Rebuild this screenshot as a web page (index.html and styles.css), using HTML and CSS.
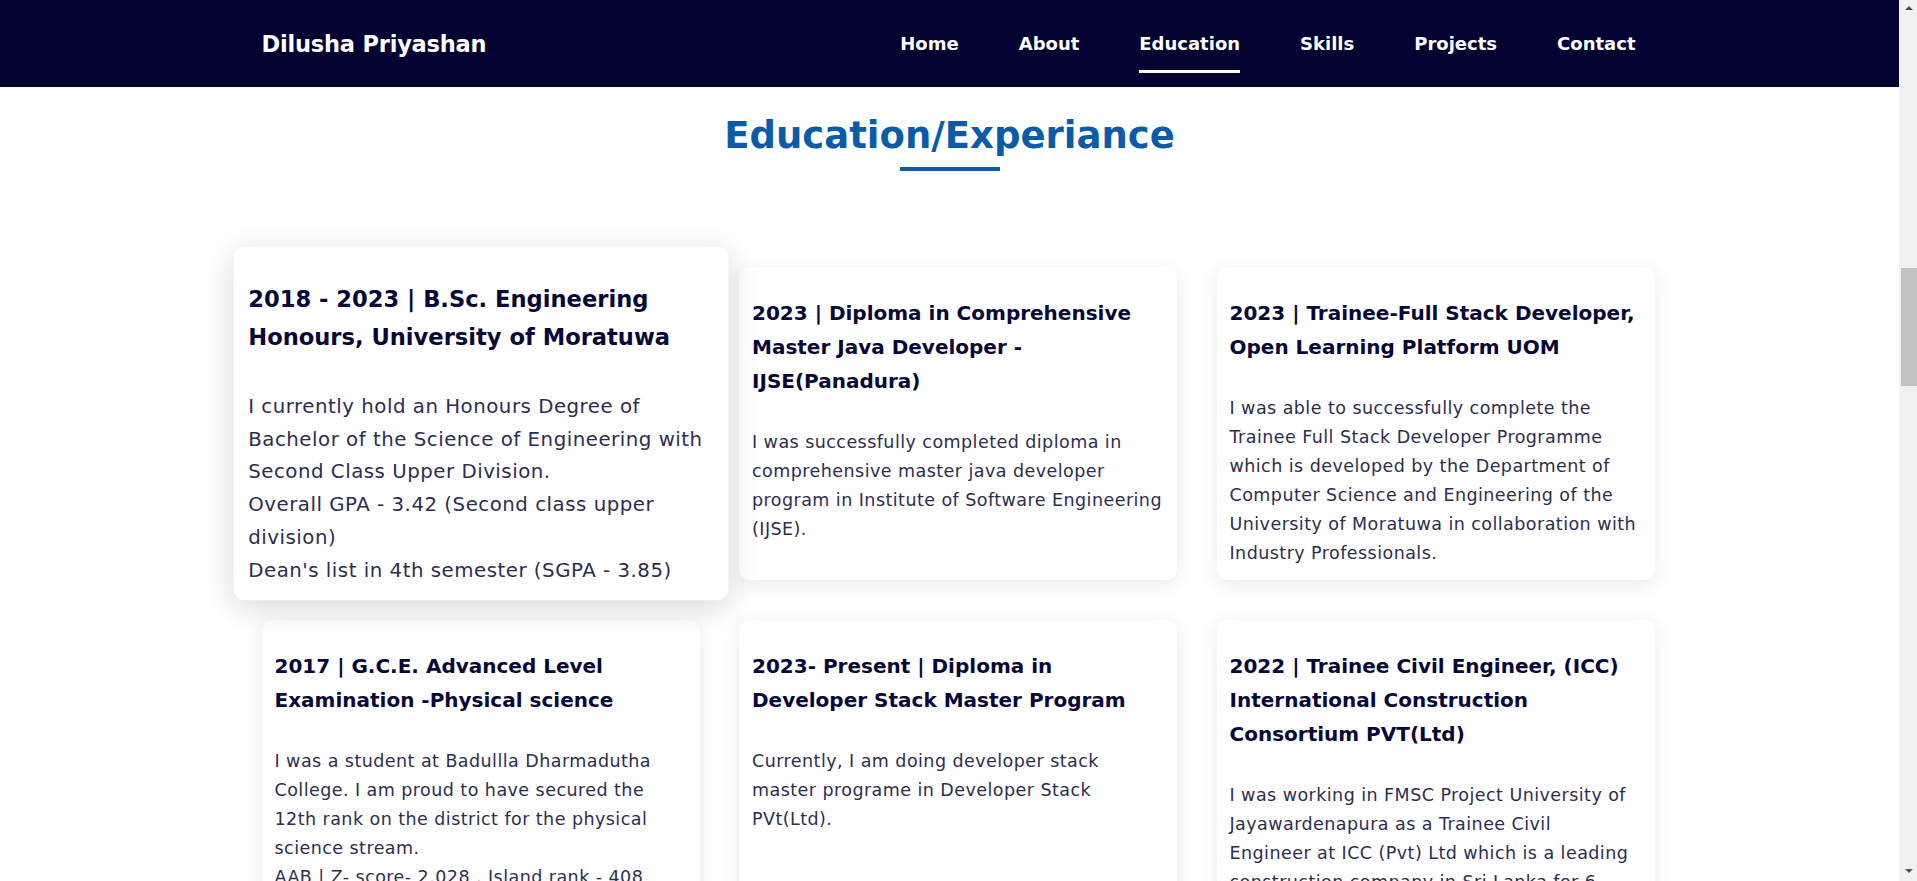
FILE: index.html
```html
<!DOCTYPE html>
<html lang="en">
<head>
<meta charset="utf-8">
<title>Dilusha Priyashan</title>
<link rel="stylesheet" href="styles.css">
</head>
<body>
<header class="navbar">
  <div class="nav-inner">
    <a class="logo" href="#home">Dilusha Priyashan</a>
    <nav class="nav-links">
      <a href="#home">Home</a>
      <a href="#about">About</a>
      <a class="active" href="#education">Education</a>
      <a href="#skills">Skills</a>
      <a href="#projects">Projects</a>
      <a href="#contact">Contact</a>
    </nav>
  </div>
</header>

<section id="education" class="education">
  <h2 class="section-title">Education/Experiance</h2>
  <div class="title-bar"></div>
  <div class="card-grid">
    <article class="card card-focus">
      <h3>2018 - 2023 | B.Sc. Engineering Honours, University of Moratuwa</h3>
      <p>I currently hold an Honours Degree of Bachelor of the Science of Engineering with Second Class Upper Division.<br>Overall GPA - 3.42 (Second class upper division)<br>Dean's list in 4th semester (SGPA - 3.85)</p>
    </article>
    <article class="card">
      <h3>2023 | Diploma in Comprehensive Master Java Developer - IJSE(Panadura)</h3>
      <p>I was successfully completed diploma in comprehensive master java developer program in Institute of Software Engineering (IJSE).</p>
    </article>
    <article class="card">
      <h3>2023 | Trainee-Full Stack Developer, Open Learning Platform UOM</h3>
      <p>I was able to successfully complete the Trainee Full Stack Developer Programme which is developed by the Department of Computer Science and Engineering of the University of Moratuwa in collaboration with Industry Professionals.</p>
    </article>
    <article class="card">
      <h3>2017 | G.C.E. Advanced Level Examination -Physical science</h3>
      <p>I was a student at Badullla Dharmadutha College. I am proud to have secured the 12th rank on the district for the physical science stream.<br>AAB | Z- score- 2.028 , Island rank - 408</p>
    </article>
    <article class="card">
      <h3>2023- Present | Diploma in Developer Stack Master Program</h3>
      <p>Currently, I am doing developer stack master programe in Developer Stack PVt(Ltd).</p>
    </article>
    <article class="card">
      <h3>2022 | Trainee Civil Engineer, (ICC) International Construction Consortium PVT(Ltd)</h3>
      <p>I was working in FMSC Project University of Jayawardenapura as a Trainee Civil<br>Engineer at ICC (Pvt) Ltd which is a leading construction company in Sri Lanka for 6 months.</p>
    </article>
  </div>
</section>

<div class="scrollbar" aria-hidden="true">
  <span class="sb-arrow sb-up"></span>
  <span class="sb-thumb"></span>
  <span class="sb-arrow sb-down"></span>
</div>
</body>
</html>
```

FILE: styles.css
```css
* { box-sizing: border-box; }

html, body {
  margin: 0;
  padding: 0;
  background: #ffffff;
  font-family: "DejaVu Sans", "Open Sans", sans-serif;
}

body {
  padding-right: 18px;
}

a { text-decoration: none; color: inherit; }

/* navbar */
.navbar {
  height: 87px;
  background: #020233;
}

.nav-inner {
  width: 1393px;
  height: 100%;
  margin-left: calc(50% - 688px);
  padding-right: 19px;
  display: flex;
  align-items: center;
  justify-content: space-between;
}

.logo {
  color: #ffffff;
  font-size: 22.5px;
  font-weight: 700;
  letter-spacing: -0.2px;
}

.nav-links {
  display: flex;
  gap: 60px;
}

.nav-links a {
  color: #ffffff;
  font-size: 18px;
  font-weight: 700;
  line-height: 27px;
  padding: 15px 0 13px;
  border-bottom: 3px solid transparent;
}

.nav-links a.active {
  border-bottom-color: #ffffff;
}

/* education section */
.education {
  padding-top: 22px;
  padding-bottom: 60px;
}

.section-title {
  margin: 0;
  text-align: center;
  font-size: 37px;
  line-height: 54px;
  font-weight: 700;
  color: #0a5ca8;
}

.title-bar {
  width: 100px;
  height: 4px;
  margin: 4px auto 0;
  background: #0a5ca8;
}

.card-grid {
  width: 1393px;
  margin-left: calc(50% - 688px);
  margin-top: 96px;
  display: grid;
  grid-template-columns: repeat(3, 438px);
  column-gap: 39.5px;
  row-gap: 40px;
}

.card {
  background: #ffffff;
  border-radius: 10px;
  padding: 12px 13.6px 12px 13px;
  box-shadow: 0 4px 18px rgba(20, 20, 40, 0.09);
}

.card-focus {
  transform: scale(1.13);
  box-shadow: 0 6px 26px rgba(20, 20, 40, 0.16);
  position: relative;
  z-index: 2;
}

.card h3 {
  margin: 17px 0 30px;
  font-size: 20px;
  line-height: 34px;
  font-weight: 700;
  color: #07073a;
}

.card p {
  margin: 0;
  font-size: 17.5px;
  line-height: 29px;
  letter-spacing: 0.45px;
  font-weight: 400;
  color: #2d2d52;
}

/* window scrollbar drawn over the right edge */
.scrollbar {
  position: fixed;
  top: 0;
  right: 0;
  width: 18px;
  height: 100vh;
  background: #f1f1f1;
  display: flex;
  flex-direction: column;
  align-items: center;
}

.sb-arrow {
  width: 0;
  height: 0;
  border-left: 4px solid transparent;
  border-right: 4px solid transparent;
  margin-left: 2px;
}

.sb-up {
  margin-top: 6px;
  border-bottom: 4px solid #505050;
}

.sb-down {
  margin-top: auto;
  margin-bottom: 8px;
  border-top: 4px solid #505050;
}

.sb-thumb {
  width: 16px;
  height: 118px;
  margin-top: 258px;
  margin-left: 2px;
  background: #c1c1c1;
}
```
